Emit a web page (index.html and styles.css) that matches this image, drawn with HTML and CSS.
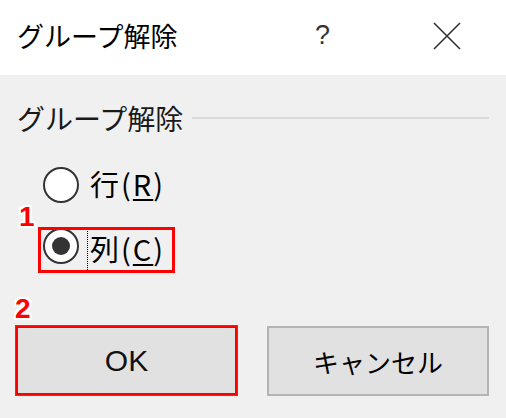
FILE: index.html
```html
<!doctype html>
<html>
<head>
<meta charset="utf-8">
<title>グループ解除</title>
<link rel="stylesheet" href="styles.css">
</head>
<body>
	<div class="dialog">
		<div class="titlebar">
			<span class="title">グループ解除</span>
			<span class="help">?</span>
			<span class="close">
				<svg width="28" height="28" viewBox="0 0 28 28"><path d="M1 1L27 27M27 1L1 27" stroke="#333" stroke-width="1.6" fill="none"/></svg>
			</span>
		</div>
		<div class="content">
			<div class="group-head">
				<span class="group-label">グループ解除</span>
				<span class="group-line"></span>
			</div>
			<div class="options">
				<div class="option">
					<span class="radio"></span>
					<span class="option-text">行(<u>R</u>)</span>
				</div>
				<div class="option">
					<span class="radio checked"></span>
					<span class="option-text focus">列(<u>C</u>)</span>
				</div>
			</div>
			<div class="buttons">
				<div class="button default">OK</div>
				<div class="button">キャンセル</div>
			</div>
		</div>
		<!-- 注釈 -->
		<div class="mark mark-1"></div>
		<span class="num num-1">1</span>
		<span class="num num-2">2</span>
	</div>
</body>
</html>
```

FILE: styles.css
```css
html,body{
	margin:0;
	padding:0;
}
body{
	font-family:"Noto Sans CJK JP","Liberation Sans",sans-serif;
	color:#000;
	background:#f0f0f0;
}
.dialog{
	width:506px;
	height:418px;
	position:relative;
	overflow:hidden;
	background:#f0f0f0;
}
.titlebar{
	height:75px;
	background:#fff;
	display:flex;
	align-items:center;
	padding:0 0 4px 17px;
	box-sizing:border-box;
}
.title{
	font-size:27px;
	line-height:36px;
	width:298px;
}
.help{
	font-family:"Liberation Sans",sans-serif;
	font-size:27px;
	color:#333;
	width:118px;
}
.close{
	display:flex;
	height:28px;
}
.content{
	padding:0 17px 0 15px;
}
.group-head{
	display:flex;
	align-items:center;
	margin-top:23px;
	height:40px;
	padding-left:2px;
}
.group-label{
	font-size:28px;
	line-height:40px;
	color:#1a1a1a;
}
.group-line{
	flex:1;
	height:2px;
	background:#dadada;
	margin:0 0 1px 9px;
}
.options{
	margin-left:28px;
	margin-top:24px;
	display:flex;
	flex-direction:column;
	gap:16px;
}
.option{
	display:flex;
	align-items:center;
	height:45px;
}
.radio{
	width:32px;
	height:32px;
	border:2px solid #333;
	border-radius:50%;
	background:#fff;
	display:flex;
	align-items:center;
	justify-content:center;
}
.radio.checked::after{
	content:"";
	width:18px;
	height:18px;
	border-radius:50%;
	background:#333;
}
.option-text{
	font-size:29px;
	line-height:43px;
	letter-spacing:2px;
	margin-left:8px;
	padding:0 3px;
	height:45px;
	box-sizing:border-box;
}
.option-text u{
	text-decoration-thickness:2px;
	text-underline-offset:3px;
}
.option-text.focus{
	width:88px;
	outline:1px dotted #000;
	outline-offset:-1px;
	margin-top:8px;
}
.buttons{
	display:flex;
	justify-content:space-between;
	margin-top:58px;
}
.button{
	width:222px;
	height:70px;
	box-sizing:border-box;
	background:#e1e1e1;
	border:2px solid #b4b4b4;
	display:flex;
	align-items:center;
	justify-content:center;
	font-size:26px;
}
.button.default{
	width:223px;
	height:71px;
	margin-top:-1px;
	border:1px solid #0078d7;
	box-shadow:inset 0 0 0 2px #f00;
	font-family:"Liberation Sans",sans-serif;
	font-size:30px;
	color:#111;
}
.mark{
	position:absolute;
	border:3px solid #f00;
	box-sizing:border-box;
}
.mark-1{
	left:38px;
	top:227px;
	width:137px;
	height:46px;
}
.num{
	position:absolute;
	font-family:"Liberation Sans",sans-serif;
	font-weight:bold;
	font-size:28px;
	line-height:28px;
	color:#f00;
	text-shadow:-2px 0 #fff,2px 0 #fff,0 -2px #fff,0 2px #fff,-2px -2px #fff,2px 2px #fff,-2px 2px #fff,2px -2px #fff;
}
.num-1{
	left:19px;
	top:203px;
}
.num-2{
	left:15px;
	top:295px;
}
```
